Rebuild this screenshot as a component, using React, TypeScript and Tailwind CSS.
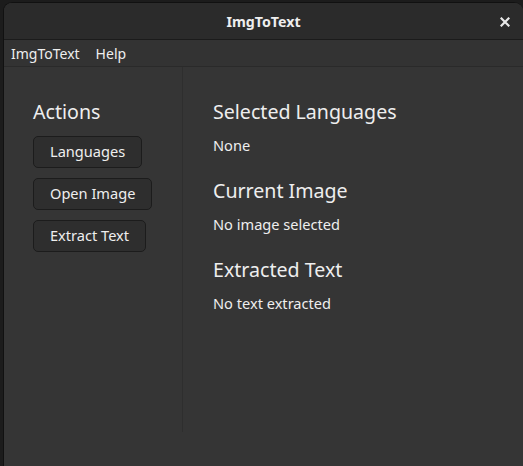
export default function App() {
  return (
    <div
      className="h-[466px] w-[523px] overflow-hidden bg-[#1c1c1c] pl-[3px] pt-[2px] text-[#eeeeee]"
      style={{ fontFamily: '"Noto Sans", "Open Sans", sans-serif' }}
    >
      <div className="flex h-[470px] flex-col overflow-hidden rounded-tl-[9px] rounded-tr-[9px] border-l border-t border-[#111111] bg-[#353535]">
        <header className="relative flex h-[37px] shrink-0 items-center justify-center border-b border-[#1b1b1b] bg-[#2b2b2b] pt-[2px]">
          <span className="text-[14.2px] font-bold">ImgToText</span>
          <svg
            className="absolute right-[13px] top-[14px]"
            width="10"
            height="10"
            viewBox="0 0 10 10"
          >
            <path d="M1.5 1.5 L8.5 8.5 M8.5 1.5 L1.5 8.5" stroke="#e8e8e8" strokeWidth="2.2" strokeLinecap="square" />
          </svg>
        </header>

        <nav className="flex h-[27px] shrink-0 items-center gap-[16px] border-b border-[#2a2a2a] bg-[#333333] pl-[7px] text-[14px]">
          <span>ImgToText</span>
          <span>Help</span>
        </nav>

        <div className="flex flex-1">
          <aside className="h-[365px] w-[179px] shrink-0 border-r border-[#2e2e2e] pl-[29px] pt-[31px]">
            <h2 className="text-[19.6px] leading-[27px]">Actions</h2>
            <div className="mt-[11px] flex flex-col items-start gap-[10px]">
              <button className="h-[32px] rounded-[5px] border border-[#1c1c1c] bg-[#2e2e2e] px-[16px] text-[14.6px]">
                Languages
              </button>
              <button className="h-[32px] rounded-[5px] border border-[#1c1c1c] bg-[#2e2e2e] px-[16px] text-[14.6px]">
                Open Image
              </button>
              <button className="h-[32px] rounded-[5px] border border-[#1c1c1c] bg-[#2e2e2e] px-[16px] text-[14.6px]">
                Extract Text
              </button>
            </div>
          </aside>

          <section className="flex-1 pl-[30px] pt-[31px]">
            <h2 className="text-[19.6px] leading-[27px]">Selected Languages</h2>
            <p className="mt-[10px] text-[14.6px] leading-[20px]">None</p>
            <h2 className="mt-[22px] text-[19.6px] leading-[27px]">Current Image</h2>
            <p className="mt-[10px] text-[14.6px] leading-[20px]">No image selected</p>
            <h2 className="mt-[22px] text-[19.6px] leading-[27px]">Extracted Text</h2>
            <p className="mt-[10px] text-[14.6px] leading-[20px]">No text extracted</p>
          </section>
        </div>
      </div>
    </div>
  );
}
